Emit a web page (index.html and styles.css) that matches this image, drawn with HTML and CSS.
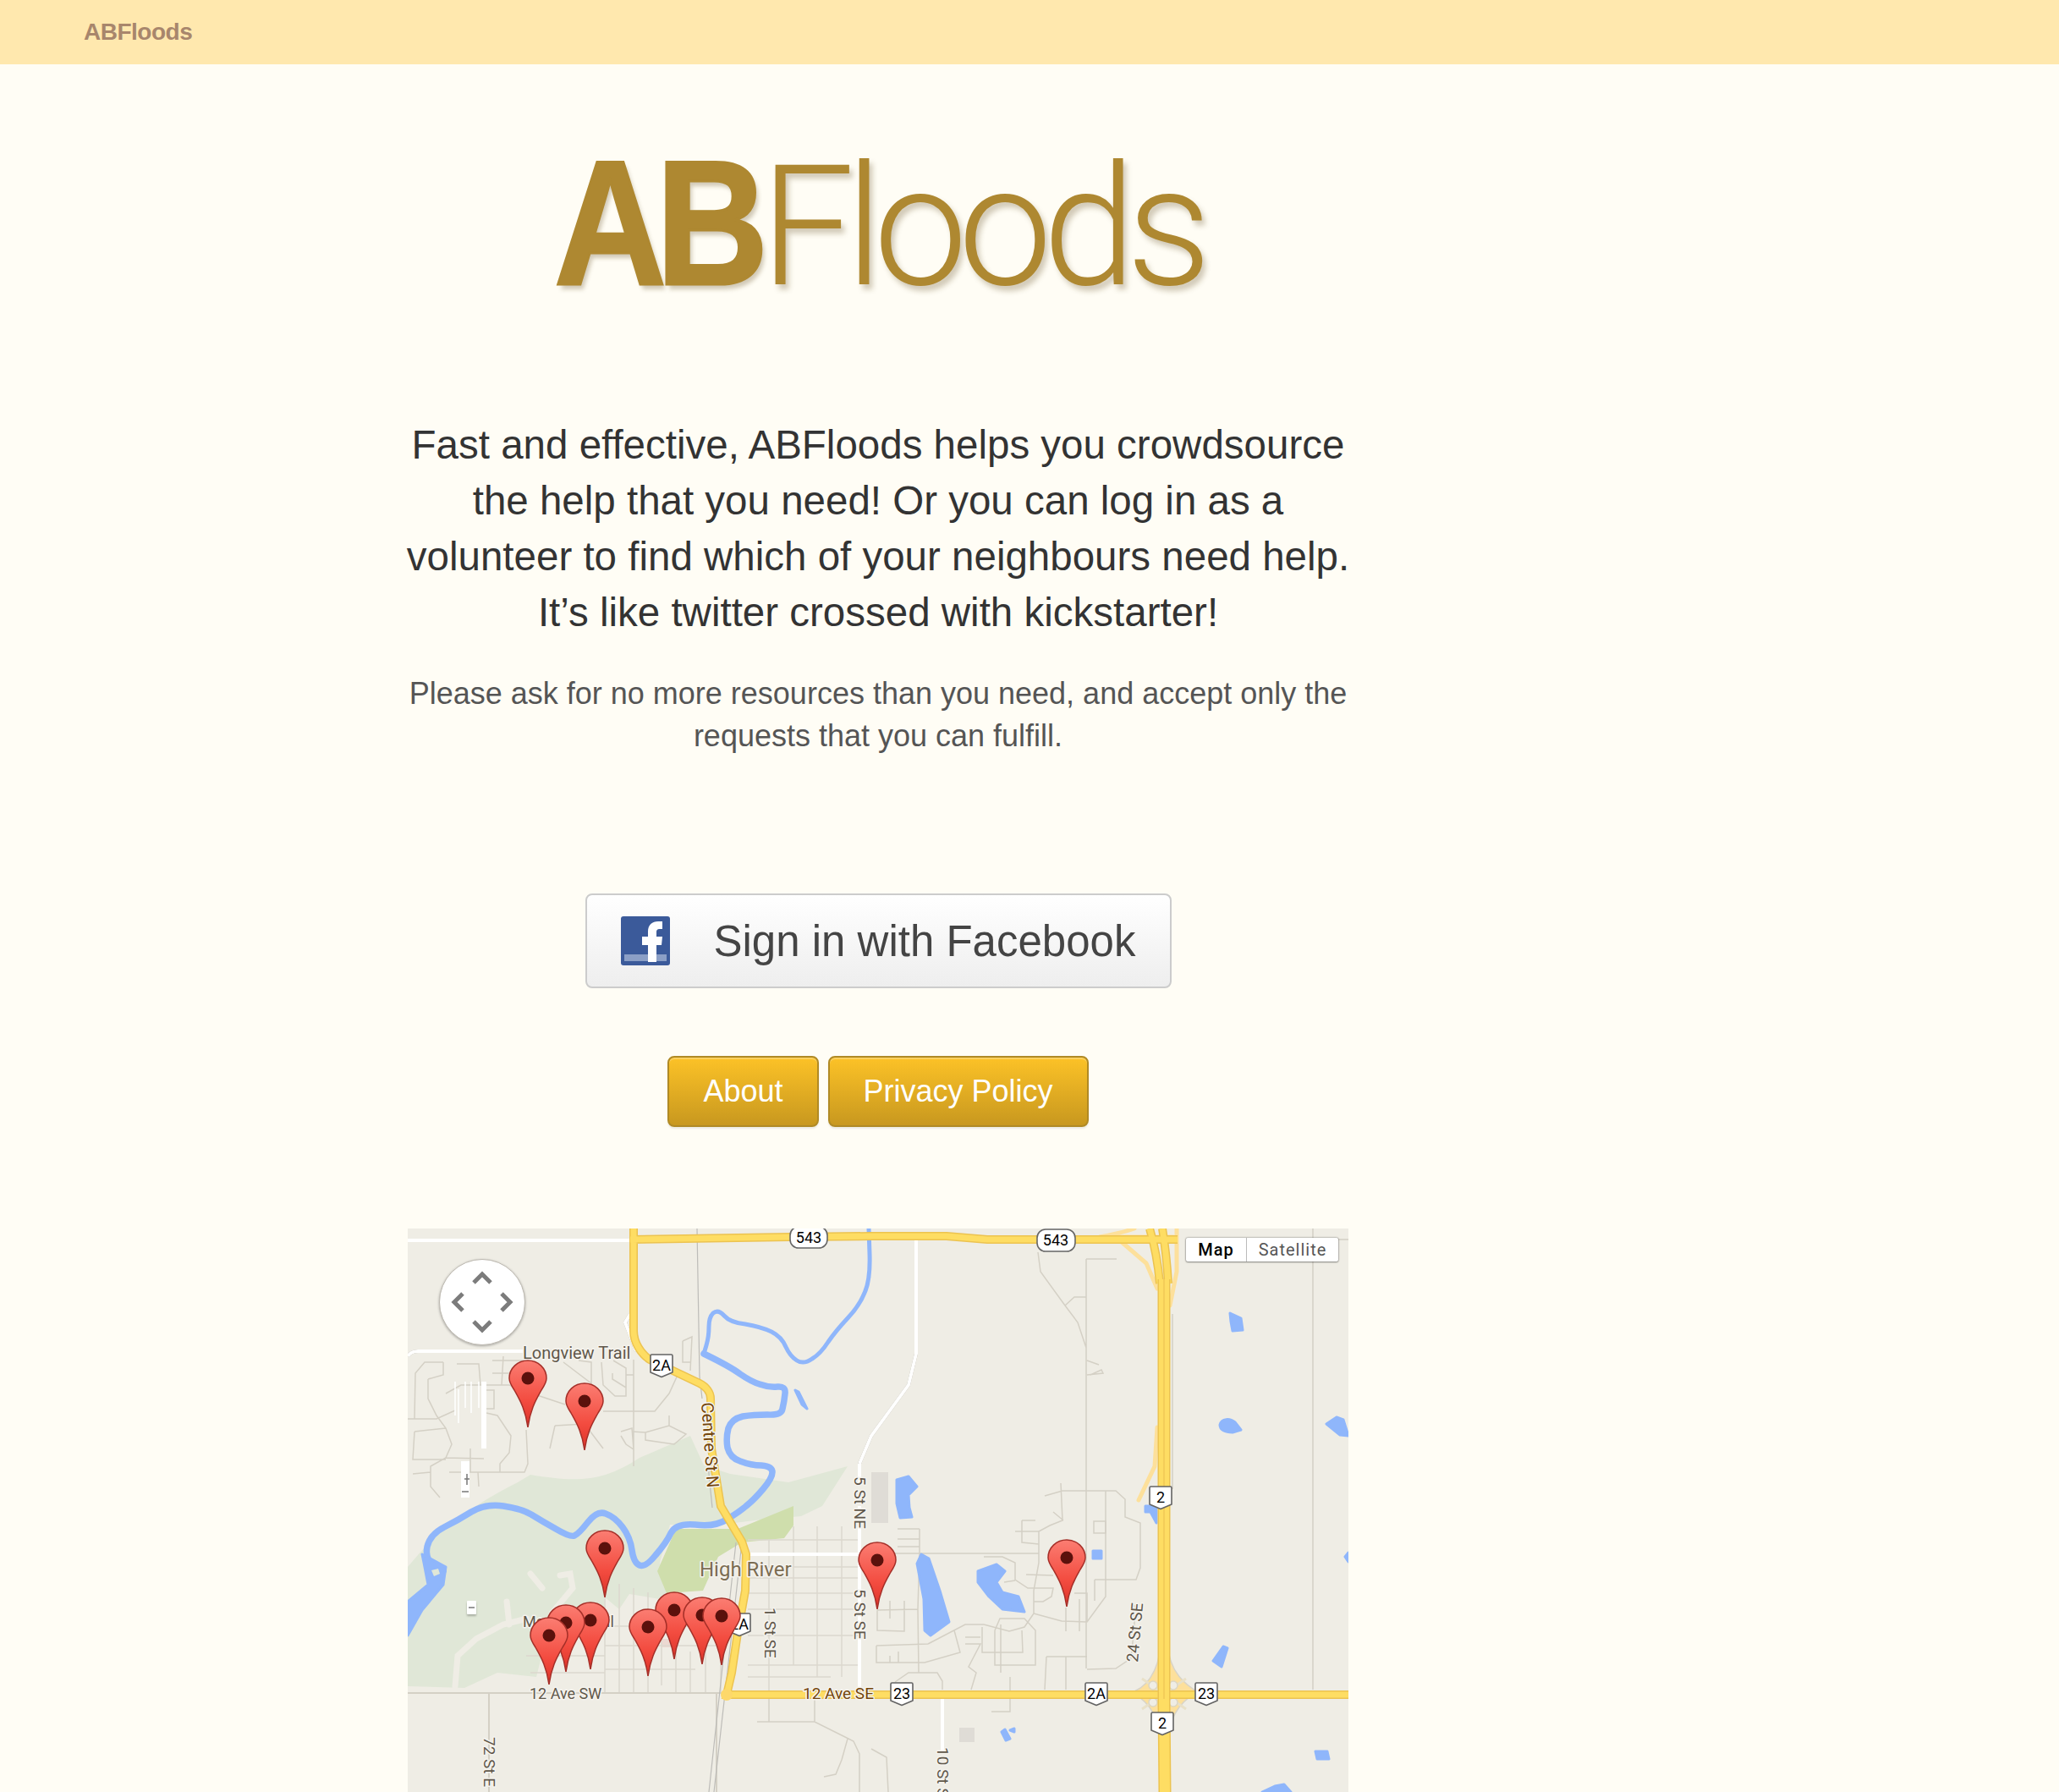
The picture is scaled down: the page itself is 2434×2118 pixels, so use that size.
FILE: index.html
```html
<!DOCTYPE html>
<html lang="en">
<head>
<meta charset="utf-8">
<title>ABFloods</title>
<link rel="stylesheet" href="styles.css">
</head>
<body>
<nav class="navbar"><a class="brand">ABFloods</a></nav>
<main class="page">
  <h1 class="logo"><span class="logo-bold">AB</span><span class="logo-light">Floods</span></h1>
  <p class="lede">Fast and effective, ABFloods helps you crowdsource the help that you need! Or you can log in as a volunteer to find which of your neighbours need help. It’s like twitter crossed with kickstarter!</p>
  <p class="note">Please ask for no more resources than you need, and accept only the requests that you can fulfill.</p>
  <div class="signin-row">
    <a class="signin">
      <svg class="fb" viewBox="0 0 58 58" width="58" height="58">
        <rect width="58" height="58" rx="3" fill="#3b5a9a"/>
        <rect x="4" y="45" width="50" height="8" fill="#8b9fc6"/>
        <path d="M32 54V34h-7V24h7v-6c0-8 5-12 12-12h5v9h-3c-3 0-4 1-4 4v5h7l-1 10h-6v20z" fill="#fff"/>
      </svg>
      <span>Sign in with Facebook</span>
    </a>
  </div>
  <div class="actions">
    <a class="btn">About</a>
    <a class="btn">Privacy Policy</a>
  </div>
  <section class="map">
    <svg class="map-svg" viewBox="0 0 1112 666" width="1112" height="666">
      <defs>
        <linearGradient id="pin" x1="0" y1="0" x2="0" y2="1">
          <stop offset="0" stop-color="#fb7d72"/>
          <stop offset="0.6" stop-color="#f34c40"/>
          <stop offset="1" stop-color="#dc3228"/>
        </linearGradient>
        <symbol id="marker" overflow="visible">
          <path d="M0 0C-3-22-10-33-16-44C-20-50-22-54-22-58A22 21 0 1 1 22-58C22-54 20-50 16-44C10-33 3-22 0 0Z" fill="url(#pin)" stroke="#a52f28" stroke-width="1.5"/>
          <ellipse cx="0" cy="-58" rx="7.5" ry="7.5" fill="#5b110c"/>
        </symbol>
        <symbol id="shield" overflow="visible">
          <path d="M-11.500-13H11.500Q13-13 13-11.500V8L0 13.500L-13 8V-11.500Q-13-13-11.500-13Z" fill="#fff" stroke="#636363" stroke-width="1.600" stroke-linejoin="round"/>
        </symbol>
      </defs>

      <!-- parks -->
      <path class="park" d="M0 541V400C40 350 90 320 130 300L145 291C200 300 230 300 274 271L334 245L350 280L381 290L450 300L520 281L490 328L465 340L410 345L370 350L310 350L298 395L310 440L262 432L250 450L232 435V470L210 480L165 478L152 530L106 525L67 543Z"/>
      <path class="park-bright" d="M295 405L317 355L390 355L456 328V351L445 366L395 371L367 388L349 428L306 431Z"/>

      <!-- hill tracks -->
      <path class="track" d="M56 541L59 505L81 485L113 468L141 461M117 441L120 468M145 408L159 425M180 410L192 408L195 425L170 455"/>

      <!-- buildings -->
      <path class="building" d="M548 288H568V348H548ZM652 590H670V607H652Z"/>
      <path class="pinkish" d="M300 485H318V495H300Z"/>

      <!-- minor streets -->
      <path class="street" d="M42 158H20L9 171L8 225M24 178L42 173V158M24 178V201L34 221L45 236L52 255L45 271L27 281V305L38 318M0 225H34L56 215M8 240L45 236M8 240L6 273H45M6 290L27 288M58 160H84L86 185M100 156H138M113 151L111 185M100 171H134M45 195L63 185H120L156 198L186 208M93 191H102V213H93M93 218L106 221L122 245L120 265L109 278V288M45 271L90 272M74 260V288M49 288H138L142 278L140 238M83 288L84 305M184 158L217 183V158L202 156M229 158L231 185L245 198H258V165L243 156M242 171V178L258 188M258 173H267M267 155V281M231 216H292L309 195L320 171M174 233L209 231L231 260M174 233L168 260M252 240L265 236L267 261L258 255L252 245M265 240L281 241L309 233L329 243L315 255L281 250V241M309 221V233M325 133L336 128L334 168M325 133V158H334"/>
      <path class="street" d="M745 28L748 51L777 91L792 111L802 141M777 91L788 81H802M802 36H838M802 36V520M803 156L817 161M803 173L822 171L820 167L807 173M753 316L774 310H837L848 320V341L866 348V401L861 415H812M772 301L774 345L759 351L746 358V395L740 428V455L729 471L711 476L681 468M825 310V435L803 465L773 464L740 455M904 101V308M1070 0V545M1070 13H1112"/>
      <path class="street" d="M537 384H746M605 355V383L603 450L604 525M579 355H605M579 367H605M579 376H605M726 345H742M726 345V371L746 373M718 358H746M763 335L775 345M681 388H703L718 395V415L733 425H763L761 435L751 441H740M731 409L763 410M705 418L718 416M812 415V440M811 346H825V360H811ZM788 431H803V465M778 448V476M794 438V476M755 506H803M755 506L753 545M778 506V545M803 521L837 520L855 508L859 470V445M615 491L659 468H681M554 493L615 491M554 493V513H611L653 501L646 475M570 505V513M580 500V513M659 483H677M659 491H677L663 518L672 525L666 545M679 471V501H727L726 475M694 475V516H742V475L729 461H700L694 475M701 468V525M576 536L592 525H626L632 535V545M712 530V571H690M555 451L603 450M555 451V475L587 476V440M570 440V461M548 615L566 625L568 666M413 583H481L517 601L527 606L534 621V666M427 548V583M481 555V583M520 603L513 628L506 645L492 648"/>
      <path class="street light" d="M402 368H534M402 400H534M402 413H534M402 431H534M402 450H534M402 481H534M402 516H534M402 530H500M427 368V548M456 352V516M484 352V530M513 352V530"/>
      <path class="street light" d="M233 420V549M250 420V549M267 425V549M284 430V549M300 470V540M317 500V549M334 500V549M352 480V549M370 490V549M233 470H370M233 493H370M233 521H340M140 505H233M145 525H233"/>
      <path class="street wide" d="M0 549H377M96 549V666M365 548V666"/>
      <path class="rail" d="M342 0L345 175L348 201M355 280L360 330M388 371L356 666M395 371L362 666"/>

      <!-- water -->
      <g class="river">
        <path class="r-thin" d="M545 0L546 30Q547 61 540 76Q534 91 520 106Q506 121 497 134Q488 148 478 154Q468 161 460 156Q452 151 447 140Q442 128 430 122Q417 116 399 113Q381 111 374 103Q367 95 361 100Q356 105 356 116Q356 128 353 138L350 148"/>
        <path class="r-wide" d="M350 148Q381 163 393 172Q406 181 416 184Q427 188 437 187Q447 186 446 195Q445 205 443 213Q442 221 425 220Q409 220 396 222Q383 225 379 236Q376 248 378 259Q381 271 393 275Q406 280 418 280Q431 281 431 288Q431 295 420 308Q409 321 400 328Q392 335 377 344Q363 353 340 350Q317 348 311 360Q306 371 293 386Q281 401 274 398Q267 395 265 380Q263 365 254 353Q245 341 234 337Q224 333 213 347Q202 361 197 363Q192 365 175 355Q159 346 146 338Q134 331 113 328Q92 325 75 335Q59 345 43 353Q27 361 23 376Q20 391 31 398L42 405"/>
      </g>
      <path class="water" d="M17 385L45 400L42 421L17 451L0 481V441L24 421L20 400ZM458 191L462 193L472 213L466 208ZM972 100L985 106L987 120L975 121L973 110ZM960 232C962 224 972 224 978 229L985 238L975 241C966 241 960 238 960 232ZM1086 231L1098 223L1106 226L1112 245L1102 244ZM578 297L592 293L602 305L592 315L593 330L596 341L582 342L578 325ZM607 385L616 390L629 428L640 465L618 481L611 475L610 438L602 396ZM674 405L696 397L706 405L696 418L703 430L722 435L729 453L703 450L687 435L674 418ZM810 381H820V390H810ZM964 494L969 496L962 518L952 511ZM1108 388L1112 383V394ZM1073 618H1087L1089 627H1075ZM1010 666L1025 659L1036 657L1044 666ZM702 595L707 605L712 603L706 592ZM712 593L717 591V595ZM872 328H885V348L878 335H872Z"/>
      <path class="park" d="M28 404L36 402L38 408L31 411Z"/>

      <!-- white roads -->
      <g class="road-white">
        <path d="M0 14H263M0 151Q4 145 12 145H136M263 101L257 111L270 145M402 385H534M534 328V545M534 278V300M601 13V148L592 185L548 245L534 278M632 552V620"/>
      </g>
      <path class="white-bar" d="M87 181H93V260H87ZM63 275H73V318H63Z"/>
      <path class="white-tick" d="M56 181V221M60 190V230M68 181V212M75 181V218M84 181V212"/>
      <path class="tick" d="M67 296H73M70 290V303M64 311H72"/>

      <!-- ramps -->
      <g class="ramp">
        <path d="M818 10Q845 5 859 0M844 16L873 41L886 71M909 0V51L901 91M886 235L883 281L864 321M818 10H905"/>
      </g>
      <path class="ramp-fill" d="M852 549C872 545 888 525 890 490H898C900 525 920 540 936 549C920 553 900 570 898 610H890C888 570 870 553 852 549Z"/>
      <path class="ramp-cross" d="M868 532L920 568M920 532L868 568"/>
      <g class="loops">
        <circle cx="881" cy="540" r="5"/><circle cx="905" cy="540" r="5"/><circle cx="881" cy="560" r="5"/><circle cx="905" cy="560" r="5"/>
      </g>

      <!-- highways -->
      <g class="hw-edge">
        <path d="M263 13L452 10L548 9H637L685 13H910M267 0V121C267 135 276 148 286 155L345 183C353 187 358 194 358 201L359 260L370 328L395 370L400 385L399 428L390 478L383 525L377 551H1112"/>
        <path d="M877 0Q886 30 889 65M892 0Q897 30 899 65"/>
      </g>
      <g class="hw-core">
        <path d="M263 13L452 10L548 9H637L685 13H910M267 0V121C267 135 276 148 286 155L345 183C353 187 358 194 358 201L359 260L370 328L395 370L400 385L399 428L390 478L383 525L377 551H1112"/>
        <path d="M877 0Q886 30 889 65M892 0Q897 30 899 65"/>
      </g>
      <g class="hw2-edge">
        <path d="M894 60V560L895 666"/>
      </g>
      <g class="hw2-core">
        <path d="M894 60V560L895 666"/>
      </g>
      <path class="hw-line" d="M894 60V556"/>
      <circle class="hw-end" cx="377" cy="551" r="7"/>

      <!-- shields -->
      <rect class="oval" x="452" y="-2" width="44" height="25" rx="10"/>
      <rect class="oval" x="744" y="1" width="45" height="26" rx="10"/>
      <text class="shield-t" x="474" y="17">543</text>
      <text class="shield-t" x="766" y="20">543</text>
      <use href="#shield" x="300" y="162"/><text class="shield-t" x="300" y="168">2A</text>
      <use href="#shield" x="392" y="468"/><text class="shield-t" x="392" y="474">2A</text>
      <use href="#shield" x="890" y="318"/><text class="shield-t" x="890" y="324">2</text>
      <use href="#shield" x="584" y="550"/><text class="shield-t" x="584" y="556">23</text>
      <use href="#shield" x="814" y="550"/><text class="shield-t" x="814" y="556">2A</text>
      <use href="#shield" x="944" y="550"/><text class="shield-t" x="944" y="556">23</text>
      <use href="#shield" x="892" y="585"/><text class="shield-t" x="892" y="591">2</text>

      <!-- labels -->
      <text class="label big" x="136" y="154">Longview Trail</text>
      <text class="label road-l big" transform="translate(347 206) rotate(86)">Centre St N</text>
      <text class="label mid" transform="translate(528 293) rotate(90)">5 St NE</text>
      <text class="label mid" transform="translate(528 426) rotate(90)">5 St SE</text>
      <text class="label mid" transform="translate(422 448) rotate(90)">1 St SE</text>
      <text class="label town" x="345" y="411">High River</text>
      <text class="label" x="136" y="471">Macleod Trail</text>
      <text class="label" x="144" y="556">12 Ave SW</text>
      <text class="label road-l mid" x="467" y="556">12 Ave SE</text>
      <text class="label mid" transform="translate(90 601) rotate(90)">72 St E</text>
      <text class="label mid" transform="translate(626 613) rotate(90)">10 St SE</text>
      <text class="label mid" transform="translate(863 513) rotate(-85)">24 St SE</text>

      <!-- stray tile marker -->
      <rect class="tile" x="70" y="440" width="11" height="16" rx="1"/>
      <path class="tick" d="M72 448H79"/>

      <!-- pins -->
      <use href="#marker" x="216" y="521"/>
      <use href="#marker" x="187" y="524"/>
      <use href="#marker" x="167" y="539"/>
      <use href="#marker" x="315" y="509"/>
      <use href="#marker" x="348" y="515"/>
      <use href="#marker" x="371" y="516"/>
      <use href="#marker" x="284" y="529"/>
      <use href="#marker" x="233" y="436"/>
      <use href="#marker" x="142" y="235"/>
      <use href="#marker" x="209" y="262"/>
      <use href="#marker" x="555" y="450"/>
      <use href="#marker" x="779" y="447"/>
    </svg>
    <div class="pan">
      <svg viewBox="0 0 100 100" width="100" height="100">
        <path class="chev" d="M40 27L50 17L60 27M40 73L50 83L60 73M27 40L17 50L27 60M73 40L83 50L73 60"/>
      </svg>
    </div>
    <div class="maptype"><span class="mt on">Map</span><span class="mt">Satellite</span></div>
  </section>
</main>
</body>
</html>
```
FILE: styles.css
```css
html, body { margin: 0; height: 2118px; overflow: hidden; }
body { background: #fffdf5; font-family: "Liberation Sans", Arial, sans-serif; color: #333; }

.navbar { height: 76px; background: #ffe8ae; padding-left: 99px; display: flex; align-items: center; }
.brand { font-size: 28px; font-weight: 700; color: #a8866c; letter-spacing: -0.5px; }

.page { width: 1112px; margin-left: 482px; text-align: center; }

.logo { margin: 73px 0 0; height: 230px; display: flex; justify-content: center; align-items: baseline; line-height: 230px; font-weight: 400; color: #ae8831; white-space: nowrap; text-shadow: 4px 6px 6px rgba(90, 70, 20, .28); }
.logo-bold { display: inline-block; font-size: 209px; font-weight: 700; letter-spacing: -14px; -webkit-text-stroke: 3px #ae8831; transform: scaleX(.88); transform-origin: left; margin-right: -30px; }
.logo-light { font-family: Roboto, "Liberation Sans", sans-serif; font-size: 198px; font-weight: 300; letter-spacing: -11px; }

.lede { margin: 114px -12px 0; font-size: 47.500px; line-height: 66px; color: #333; }
.note { margin: 38px 0 0; font-size: 36px; line-height: 50px; color: #555; }

.signin-row { margin-top: 161px; display: flex; justify-content: center; }
.signin { width: 693px; height: 112px; box-sizing: border-box; border: 2px solid #ccc; border-radius: 8px; background: linear-gradient(#fff, #eee); display: flex; align-items: center; padding-left: 40px; gap: 52px; font-size: 51px; color: #444; }
.fb { flex: none; }

.actions { margin-top: 80px; display: flex; justify-content: center; gap: 11px; }
.btn { height: 84px; box-sizing: border-box; padding: 0 40px; border: 2px solid #b08a25; border-radius: 8px; background: linear-gradient(#fcc227, #c8981f); box-shadow: inset 0 2px 0 rgba(255,255,255,.25), 0 2px 2px rgba(0,0,0,.08); font-size: 36px; line-height: 80px; color: #fff; }

.map { position: relative; margin-top: 120px; height: 666px; overflow: hidden; background: #efede5; text-align: left; }
.map-svg { display: block; }

.park { fill: #e0e7d7; }
.park-bright { fill: #cfdeac; }
.track { fill: none; stroke: #efede5; stroke-width: 7; stroke-linecap: round; }
.building { fill: #dfdcd6; }
.pinkish { fill: #ecd9d2; }
.street { fill: none; stroke: #d4d0c5; stroke-width: 1.5; }
.street.light { stroke: #dcd8ce; }
.street.wide { stroke-width: 2; }
.rail { fill: none; stroke: #bdbcb8; stroke-width: 1.200; }
.river { fill: none; stroke: #8fb6fb; stroke-linejoin: round; stroke-linecap: round; }
.r-thin { stroke-width: 5; }
.r-wide { stroke-width: 7.500; }
.water { fill: #8fb6fb; stroke: #8fb6fb; stroke-width: 3; stroke-linejoin: round; }
.road-white path { fill: none; stroke: #fff; stroke-width: 4; }
.road-white { filter: drop-shadow(0 0 .7px #a8a394); }
.white-bar { fill: #fff; }
.white-tick { fill: none; stroke: #fff; stroke-width: 1.500; }
.tick { fill: none; stroke: #777; stroke-width: 1.500; }
.tile { fill: #fff; filter: drop-shadow(0 2px 1px rgba(0,0,0,.25)); }
.ramp path { fill: none; stroke: #fde09b; stroke-width: 5; stroke-linecap: round; }
.ramp-fill { fill: #fde09b; stroke: #d9d4c6; stroke-width: 1.500; }
.ramp-cross { fill: none; stroke: #e9e1c8; stroke-width: 3; }
.loops circle { fill: #efede5; stroke: #dcd6c2; stroke-width: 1.500; }
.hw-edge path { fill: none; stroke: #ecc350; stroke-width: 10; }
.hw-core path { fill: none; stroke: #fedd63; stroke-width: 7; }
.hw2-edge path { fill: none; stroke: #ecc350; stroke-width: 15; }
.hw2-core path { fill: none; stroke: #fedd63; stroke-width: 12; }
.hw-line { fill: none; stroke: #f1c756; stroke-width: 1.500; }
.hw-end { fill: #fdd86a; }
.oval { fill: #fff; stroke: #666; stroke-width: 1.600; }
.shield-t { font-family: Roboto, sans-serif; font-size: 18px; fill: #000; text-anchor: middle; }
.label { font-family: Roboto, sans-serif; font-size: 18px; fill: #5f574a; stroke: #f5f3ee; stroke-width: 3px; paint-order: stroke; stroke-linejoin: round; }
.label.mid { font-size: 19px; }
.label.big { font-size: 20px; }
.road-l { fill: #74460a; }
.label.town { font-size: 24px; fill: #7b6c52; }

.pan { position: absolute; left: 37px; top: 36px; width: 100px; height: 100px; background: #fff; border: 1px solid #bdb9b0; border-radius: 50%; box-shadow: 0 1px 3px rgba(0,0,0,.3); }
.pan svg { display: block; }
.chev { fill: none; stroke: #7c7c7c; stroke-width: 5; }

.maptype { position: absolute; left: 920px; top: 11px; width: 180px; height: 28px; display: flex; background: #fff; border-radius: 2px; box-shadow: 0 0 2px rgba(0,0,0,.6), 0 1px 2px rgba(0,0,0,.3); font-family: Roboto, sans-serif; font-size: 20px; line-height: 28px; }
.mt { color: #565656; flex: 1; text-align: center; letter-spacing: 1px; }
.mt.on { flex: none; width: 71px; border-right: 1px solid #bbb; color: #000; font-weight: 500; }
```
